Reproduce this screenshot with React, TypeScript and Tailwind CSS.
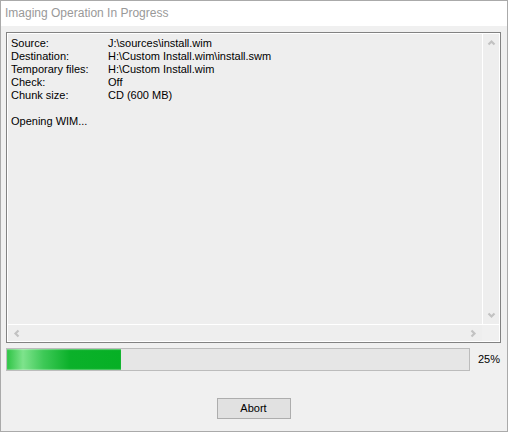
import React from "react";

const rows: [string, string][] = [
    ["Source:", "J:\\sources\\install.wim"],
    ["Destination:", "H:\\Custom Install.wim\\install.swm"],
    ["Temporary files:", "H:\\Custom Install.wim"],
    ["Check:", "Off"],
    ["Chunk size:", "CD (600 MB)"],
];

function Chevron({ dir }: { dir: "up" | "down" | "left" | "right" }) {
    const rot = { up: 0, right: 90, down: 180, left: 270 }[dir];
    return (
        <svg width="9" height="9" viewBox="0 0 9 9" style={{ transform: `rotate(${rot}deg)` }}>
            <path d="M1.5 6.5 L4.5 3.5 L7.5 6.5" fill="none" stroke="#c2c2c2" strokeWidth="2.2" />
        </svg>
    );
}

function App() {
    const progress = 25;
    return (
        <div
            className="w-[508px] h-[432px] border border-[#aaaaaa] bg-[#f0f0f0] flex flex-col text-[11px] text-black"
            style={{ fontFamily: '"Liberation Sans", Arial, sans-serif' }}
        >
            <div className="h-[25px] bg-white pl-[4px] pt-[4px] text-[12px] text-[#999999] leading-[16px]">
                Imaging Operation In Progress
            </div>
            <div className="flex-1 flex flex-col pl-[5px] pr-[6px] pt-[6px]">
                <div className="h-[311px] border border-[#828282] shadow-[inset_0_0_0_1px_#ffffff] p-px flex flex-col">
                    <div className="flex flex-1 min-h-0">
                        <div className="flex-1 bg-[#eeeeee] pl-[3px] pt-[3px] leading-[13px]">
                            {rows.map(([k, v]) => (
                                <div key={k} className="flex">
                                    <span className="w-[97px]">{k}</span>
                                    <span>{v}</span>
                                </div>
                            ))}
                            <div className="h-[13px]" />
                            <div>Opening WIM...</div>
                        </div>
                        <div className="w-[17px] border-l border-white bg-[#eeeeee] flex flex-col justify-between items-center py-[4px]">
                            <Chevron dir="up" />
                            <Chevron dir="down" />
                        </div>
                    </div>
                    <div className="h-[17px] flex border-t border-white">
                        <div className="flex-1 bg-[#eeeeee] flex justify-between items-center px-[4px]">
                            <Chevron dir="left" />
                            <Chevron dir="right" />
                        </div>
                        <div className="w-[17px] bg-[#f0f0f0]" />
                    </div>
                </div>
                <div className="flex items-center mt-[5px]">
                    <div className="w-[464px] h-[23px] border border-[#bcbcbc] bg-[#e6e6e6]">
                        <div
                            className="h-full bg-[linear-gradient(90deg,#2ec445_0%,#7ee38c_14%,#3ec957_32%,#0bb12a_55%,#06b025_100%)] shadow-[inset_0_1px_1px_rgba(255,255,255,0.35),inset_0_-1px_1px_rgba(255,255,255,0.3)]"
                            style={{ width: `${Math.round((456 * progress) / 100)}px` }}
                        />
                    </div>
                    <span className="ml-[8px] text-[11px]">{progress}%</span>
                </div>
                <div className="flex justify-center mt-[27px]">
                    <button className="w-[74px] h-[21px] border border-[#adadad] bg-[#e1e1e1] text-[11px] leading-none">
                        Abort
                    </button>
                </div>
            </div>
        </div>
    );
}

export default App;
